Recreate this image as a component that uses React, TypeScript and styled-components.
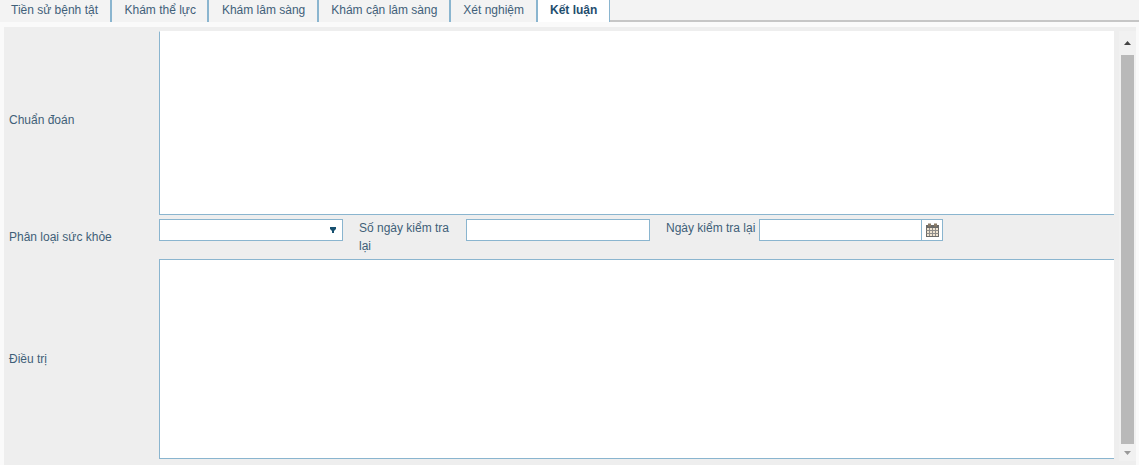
import React from "react";
import styled, { createGlobalStyle } from "styled-components";

const Global = createGlobalStyle`
  html, body { margin: 0; padding: 0; height: 465px; overflow: hidden; background: #fafafa; }
  * { box-sizing: border-box; }
  body { font-family: "Liberation Sans", Arial, sans-serif; font-size: 12px; color: #3f5f78; }
`;

const Page = styled.div`
  width: 1139px;
  height: 465px;
  display: flex;
  flex-direction: column;
  overflow: hidden;
`;

const TabBar = styled.div`
  display: flex;
  height: 22px;
  background: #f3f3f3;
  border-bottom: 2px solid #c6c6c6;
  flex: none;
`;

const Tab = styled.div<{ $active?: boolean }>`
  height: 22px;
  line-height: 20px;
  padding: 0 ${(p) => (p.$active ? 11.5 : 12.5)}px 0 12.5px;
  font-size: 12px;
  white-space: nowrap;
  border-right: 1px solid #8ab5cf;
  box-shadow: inset -1px 0 0 ${(p) => (p.$active ? "transparent" : "#8ab5cf")};
  background: ${(p) => (p.$active ? "#fff" : "#f3f3f3")};
  color: ${(p) => (p.$active ? "#1f4e6e" : "#3f6079")};
  font-weight: ${(p) => (p.$active ? 700 : 400)};
  &:first-child { padding: 0 13px 0 11px; }
`;

const Panel = styled.div`
  margin: 5px 3px 0 4px;
  height: 438px;
  background: #eee;
  display: flex;
  padding-top: 4px;
  flex: none;
`;

const Form = styled.div`
  width: 1110px;
  display: flex;
  flex-direction: column;
  flex: none;
`;

const Row = styled.div<{ $height: number }>`
  display: flex;
  height: ${(p) => p.$height}px;
  align-items: center;
`;

const RowLabel = styled.div<{ $offset: number }>`
  width: 155px;
  padding-left: 5px;
  flex: none;
  line-height: 18px;
  transform: translateY(${(p) => p.$offset}px);
`;

const TextBox = styled.div<{ $height: number; $noTop?: boolean }>`
  width: 955px;
  height: ${(p) => p.$height}px;
  background: #fff;
  border: 1px solid #8ab5cf;
  border-top-color: ${(p) => (p.$noTop ? "transparent" : "#8ab5cf")};
  border-right: none;
`;

const ControlRow = styled.div`
  display: flex;
  align-items: flex-start;
  height: 40px;
  margin-top: 4px;
`;

const Select = styled.div`
  width: 184px;
  height: 22px;
  background: #fff;
  border: 1px solid #8ab5cf;
  display: flex;
  align-items: center;
  justify-content: flex-end;
  padding-right: 6px;
  flex: none;
`;

const Caret = styled.svg`
  width: 6px;
  height: 6px;
  display: block;
`;

const Input = styled.div`
  width: 184px;
  height: 22px;
  margin-left: 16px;
  background: #fff;
  border: 1px solid #8ab5cf;
  flex: none;
`;

const FieldLabel = styled.div<{ $width: number }>`
  width: ${(p) => p.$width}px;
  margin-left: 16px;
  flex: none;
  line-height: 18px;
`;

const DateField = styled.div`
  display: flex;
  width: 184px;
  height: 22px;
  border: 1px solid #8ab5cf;
  background: #fff;
  flex: none;
`;

const DateInput = styled.div`
  flex: 1;
`;

const DateButton = styled.div`
  width: 21px;
  border-left: 1px solid #8ab5cf;
  display: flex;
  align-items: center;
  justify-content: center;
`;

const ScrollGutter = styled.div`
  width: 22px;
  padding-left: 5px;
  flex: none;
`;

const Scrollbar = styled.div`
  width: 17px;
  height: 430px;
  padding: 0 2px;
  display: flex;
  flex-direction: column;
  background: #f1f1f1;
`;

const ArrowBox = styled.div<{ $height: number }>`
  height: ${(p) => p.$height}px;
  display: flex;
  align-items: center;
  justify-content: center;
  flex: none;
`;

const Thumb = styled.div`
  height: 389px;
  background: #b9b9b9;
  flex: none;
`;

const tabs = ["Tiền sử bệnh tật", "Khám thể lực", "Khám lâm sàng", "Khám cận lâm sàng", "Xét nghiệm", "Kết luận"];

const CalendarIcon = () => (
  <svg width="13" height="14" viewBox="0 0 13 14">
    <rect x="0.500" y="2.500" width="12" height="11" fill="#efe3d0" stroke="#6b6a68" />
    <rect x="0" y="2" width="13" height="3" fill="#6b6a68" />
    <rect x="2" y="0.500" width="3" height="3" fill="#8a7a66" />
    <rect x="8" y="0.500" width="3" height="3" fill="#8a7a66" />
    <path d="M3.500 5v8M6.500 5v8M9.500 5v8M.5 7.500h12M.5 10.500h12" stroke="#8f8d8a" strokeWidth="1" fill="none" />
  </svg>
);

export default function App() {
  return (
    <Page>
      <Global />
      <TabBar>
        {tabs.map((t) => (
          <Tab key={t} $active={t === "Kết luận"}>{t}</Tab>
        ))}
      </TabBar>
      <Panel>
        <Form>
          <Row $height={184}>
            <RowLabel $offset={-3}>Chuẩn đoán</RowLabel>
            <TextBox $height={184} $noTop />
          </Row>
          <ControlRow>
            <RowLabel $offset={9}>Phân loại sức khỏe</RowLabel>
            <Select>
              <Caret viewBox="0 0 6 6"><path d="M0 0h6v2L4 4v2H2V4L0 2z" fill="#17506f" /></Caret>
            </Select>
            <FieldLabel $width={91}>Số ngày kiểm tra lại</FieldLabel>
            <Input />
            <FieldLabel $width={93}>Ngày kiểm tra lại</FieldLabel>
            <DateField>
              <DateInput />
              <DateButton><CalendarIcon /></DateButton>
            </DateField>
          </ControlRow>
          <Row $height={200}>
            <RowLabel $offset={0}>Điều trị</RowLabel>
            <TextBox $height={200} />
          </Row>
        </Form>
        <ScrollGutter>
          <Scrollbar>
            <ArrowBox $height={24}>
              <svg width="7" height="4" viewBox="0 0 7 4"><path d="M3.500 0L7 4H0z" fill="#444" /></svg>
            </ArrowBox>
            <Thumb />
            <ArrowBox $height={17}>
              <svg width="7" height="4" viewBox="0 0 7 4"><path d="M0 0h7L3.500 4z" fill="#999" /></svg>
            </ArrowBox>
          </Scrollbar>
        </ScrollGutter>
      </Panel>
    </Page>
  );
}
